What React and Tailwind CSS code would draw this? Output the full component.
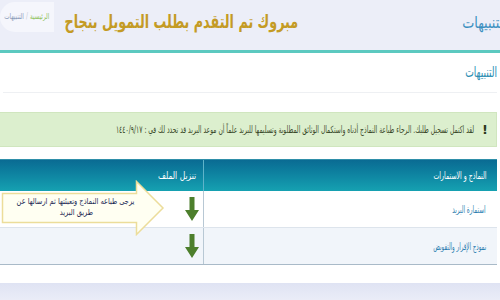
import React from "react";

const ar = { fontFamily: '"DejaVu Sans", "Noto Sans", sans-serif' };

function DownArrow() {
  return (
    <svg width="16" height="24" viewBox="0 0 16 24" className="block">
      <path d="M5.5 0 H10.5 V13 H15 L8 24 L1 13 H5.5 Z" fill="#4d7f2c" />
    </svg>
  );
}

function Callout() {
  return (
    <div className="absolute left-[5px] top-[21px] w-[164px] h-[56px]">
      <svg width="164" height="56" viewBox="0 0 164 56" className="absolute inset-0">
        <path
          d="M1.5 13.5 H135.5 V1.5 L162 28 L135.5 54.5 V42.5 H1.5 Z"
          fill="#fffff2"
          stroke="#ecdd9a"
          strokeWidth="1.5"
        />
      </svg>
      <div className="absolute left-[6px] top-[16px] w-[138px] flex flex-col items-center text-[8.5px] leading-[11px] text-[#1d2a55] whitespace-nowrap">
        <span className="inline-block scale-x-[0.78]">يرجى طباعه النماذج وتعبئتها ثم ارسالها عن</span>
        <span className="inline-block scale-x-[0.78]">طريق البريد</span>
      </div>
    </div>
  );
}

export default function App() {
  return (
    <div dir="rtl" className="w-[500px] h-[300px] overflow-hidden bg-[#eceef8]" style={ar}>
      <header className="h-[50px] flex items-center justify-between">
        <h1 className="-mr-[7px] mt-[-4px] text-[16px] text-[#3b8fc0] whitespace-nowrap">
          <span className="inline-block scale-x-[0.8] origin-right">التنبيهات</span>
        </h1>
        <div className="flex items-center gap-[9px]">
          <div className="w-[236px] flex justify-center mt-[-8px]">
            <h2 className="shrink-0 text-[19px] font-bold text-[#c49b25] whitespace-nowrap scale-x-[0.67]">مبروك تم التقدم بطلب التمويل بنجاح</h2>
          </div>
          <div className="h-[30px] w-[54px] mt-[-16px] pr-[5px] flex items-center bg-[#f5f6fc] rounded-l-full text-[8px] whitespace-nowrap">
            <span className="inline-block scale-x-[0.7] origin-right">
              <span className="text-[#8dc25a]">الرئيسية</span>
              <span className="text-[#c6cbd8] mx-[3px]">/</span>
              <span className="text-[#8a9ab8]">التنبيهات</span>
            </span>
          </div>
        </div>
      </header>

      <main className="bg-white border-t-[3px] border-[#5cc9c0] h-[233px]">
        <div className="h-[40px] mx-[3px] flex items-center border-b border-[#eef0f3]">
          <h3 className="text-[14px] text-[#2a8db2] whitespace-nowrap">
            <span className="inline-block scale-x-[0.65] origin-right">التنبيهات</span>
          </h3>
        </div>

        <div className="mt-[19px] mr-[3px] -ml-[4px] h-[35px] bg-[#dcefce] border border-[#d0e6bf] flex items-center pr-[8px] gap-[8px] overflow-hidden">
          <span className="text-[13px] font-bold text-[#2c3a1c]">!</span>
          <span className="inline-block shrink-0 text-[10px] text-[#3b4a2a] whitespace-nowrap scale-x-[0.6] origin-right">لقد اكتمل تسجيل طلبك. الرجاء طباعة النماذج أدناه واستكمال الوثائق المطلوبة وتسليمها للبريد علماً أن موعد البريد قد تحدد لك في : ١٤٤٠/٩/١٧</span>
        </div>

        <div className="relative mt-[12px] mr-[3px] -ml-[4px] border-b border-[#a9bac8]">
          <div className="flex h-[32px] border-t border-[#2f8fa9] bg-gradient-to-b from-[#0a6b93] to-[#16a1b1] text-white text-[10px] whitespace-nowrap">
            <div className="w-[294px] flex items-center pr-[11px] border-l border-[#5fb3c9]">
              <span className="inline-block scale-x-[0.62] origin-right">النماذج و الاستمارات</span>
            </div>
            <div className="flex-1 flex items-center pr-[7px]">
              <span className="inline-block scale-x-[0.76] origin-right">تنزيل الملف</span>
            </div>
          </div>
          <div className="flex h-[37px] bg-white border-b border-[#dde4ec] text-[10px] text-[#2e7fb1] whitespace-nowrap">
            <div className="w-[294px] flex items-center pr-[11px] border-l border-[#b8c8d4]">
              <span className="inline-block scale-x-[0.57] origin-right">استمارة البريد</span>
            </div>
            <div className="flex-1 flex items-center pr-[3px]"><DownArrow /></div>
          </div>
          <div className="flex h-[36px] bg-[#f1f5fa] text-[10px] text-[#2e7fb1] whitespace-nowrap">
            <div className="w-[294px] flex items-center pr-[11px] border-l border-[#b8c8d4]">
              <span className="inline-block scale-x-[0.55] origin-right">نموذج الإقرار والتفويض</span>
            </div>
            <div className="flex-1 flex items-center pr-[3px]"><DownArrow /></div>
          </div>
          <Callout />
        </div>
      </main>
      <div className="h-[20px] bg-gradient-to-b from-[#dfe3f3] to-[#eceef8]" />
    </div>
  );
}
